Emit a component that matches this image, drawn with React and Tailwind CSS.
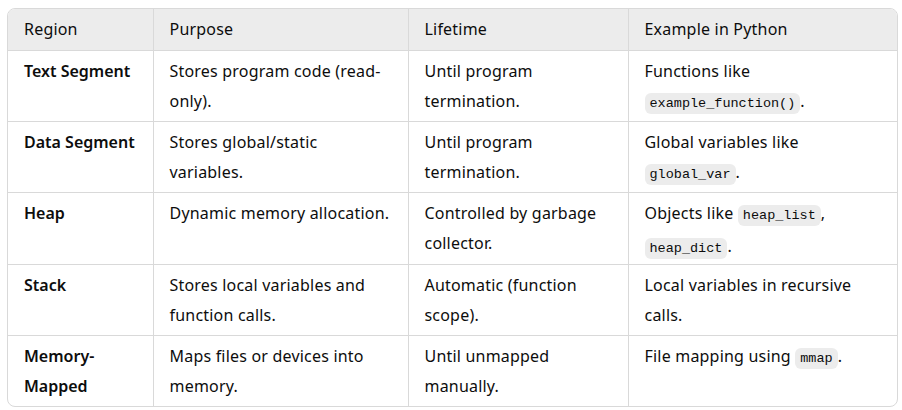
import React from "react";

const rows = [
  {
    region: "Text Segment",
    purpose: "Stores program code (read-only).",
    lifetime: "Until program termination.",
    example: ["Functions like ", { code: "example_function()" }, "."],
  },
  {
    region: "Data Segment",
    purpose: "Stores global/static variables.",
    lifetime: "Until program termination.",
    example: ["Global variables like ", { code: "global_var" }, "."],
  },
  {
    region: "Heap",
    purpose: "Dynamic memory allocation.",
    lifetime: "Controlled by garbage collector.",
    example: ["Objects like ", { code: "heap_list" }, ", ", { code: "heap_dict" }, "."],
  },
  {
    region: "Stack",
    purpose: "Stores local variables and function calls.",
    lifetime: "Automatic (function scope).",
    example: ["Local variables in recursive calls."],
  },
  {
    region: "Memory-Mapped",
    purpose: "Maps files or devices into memory.",
    lifetime: "Until unmapped manually.",
    example: ["File mapping using ", { code: "mmap" }, "."],
  },
];

const Code = ({ children }) => (
  <code className="rounded-md bg-[#ececec] px-[5px] py-[3px] text-[13.5px] tracking-normal text-[#0d0d0d] [font-family:'Liberation_Mono','DejaVu_Sans_Mono',monospace]">
    {children}
  </code>
);

export default function App() {
  return (
    <div className="bg-white w-[902px] h-[410px] pt-[8px] pl-[7px] [font-family:'Noto_Sans','Open_Sans',sans-serif] text-[16px] tracking-[0.2px] text-[#0d0d0d]">
      <div className="w-[891px] overflow-hidden rounded-lg border border-[#d9d9d9]">
        <table className="w-full border-collapse table-fixed">
          <colgroup>
            <col className="w-[145px]" />
            <col className="w-[255px]" />
            <col className="w-[220px]" />
            <col />
          </colgroup>
          <thead>
            <tr className="bg-[#ececec] h-[41px]">
              {["Region", "Purpose", "Lifetime", "Example in Python"].map((h, i) => (
                <th
                  key={h}
                  className={`text-left font-normal px-4 leading-[28px] ${i > 0 ? "border-l border-[#d9d9d9]" : ""}`}
                >
                  {h}
                </th>
              ))}
            </tr>
          </thead>
          <tbody>
            {rows.map((r) => (
              <tr key={r.region} className="h-[71px] border-t border-[#d9d9d9] align-top">
                <td className="px-4 pt-[5px] leading-[30px] font-semibold tracking-normal">{r.region}</td>
                <td className="px-4 pt-[5px] leading-[30px] border-l border-[#d9d9d9]">{r.purpose}</td>
                <td className="px-4 pt-[5px] leading-[30px] border-l border-[#d9d9d9]">{r.lifetime}</td>
                <td className="px-4 pt-[5px] leading-[30px] border-l border-[#d9d9d9]">
                  {r.example.map((p, i) =>
                    typeof p === "string" ? <span key={i}>{p}</span> : <Code key={i}>{p.code}</Code>
                  )}
                </td>
              </tr>
            ))}
          </tbody>
        </table>
      </div>
    </div>
  );
}
